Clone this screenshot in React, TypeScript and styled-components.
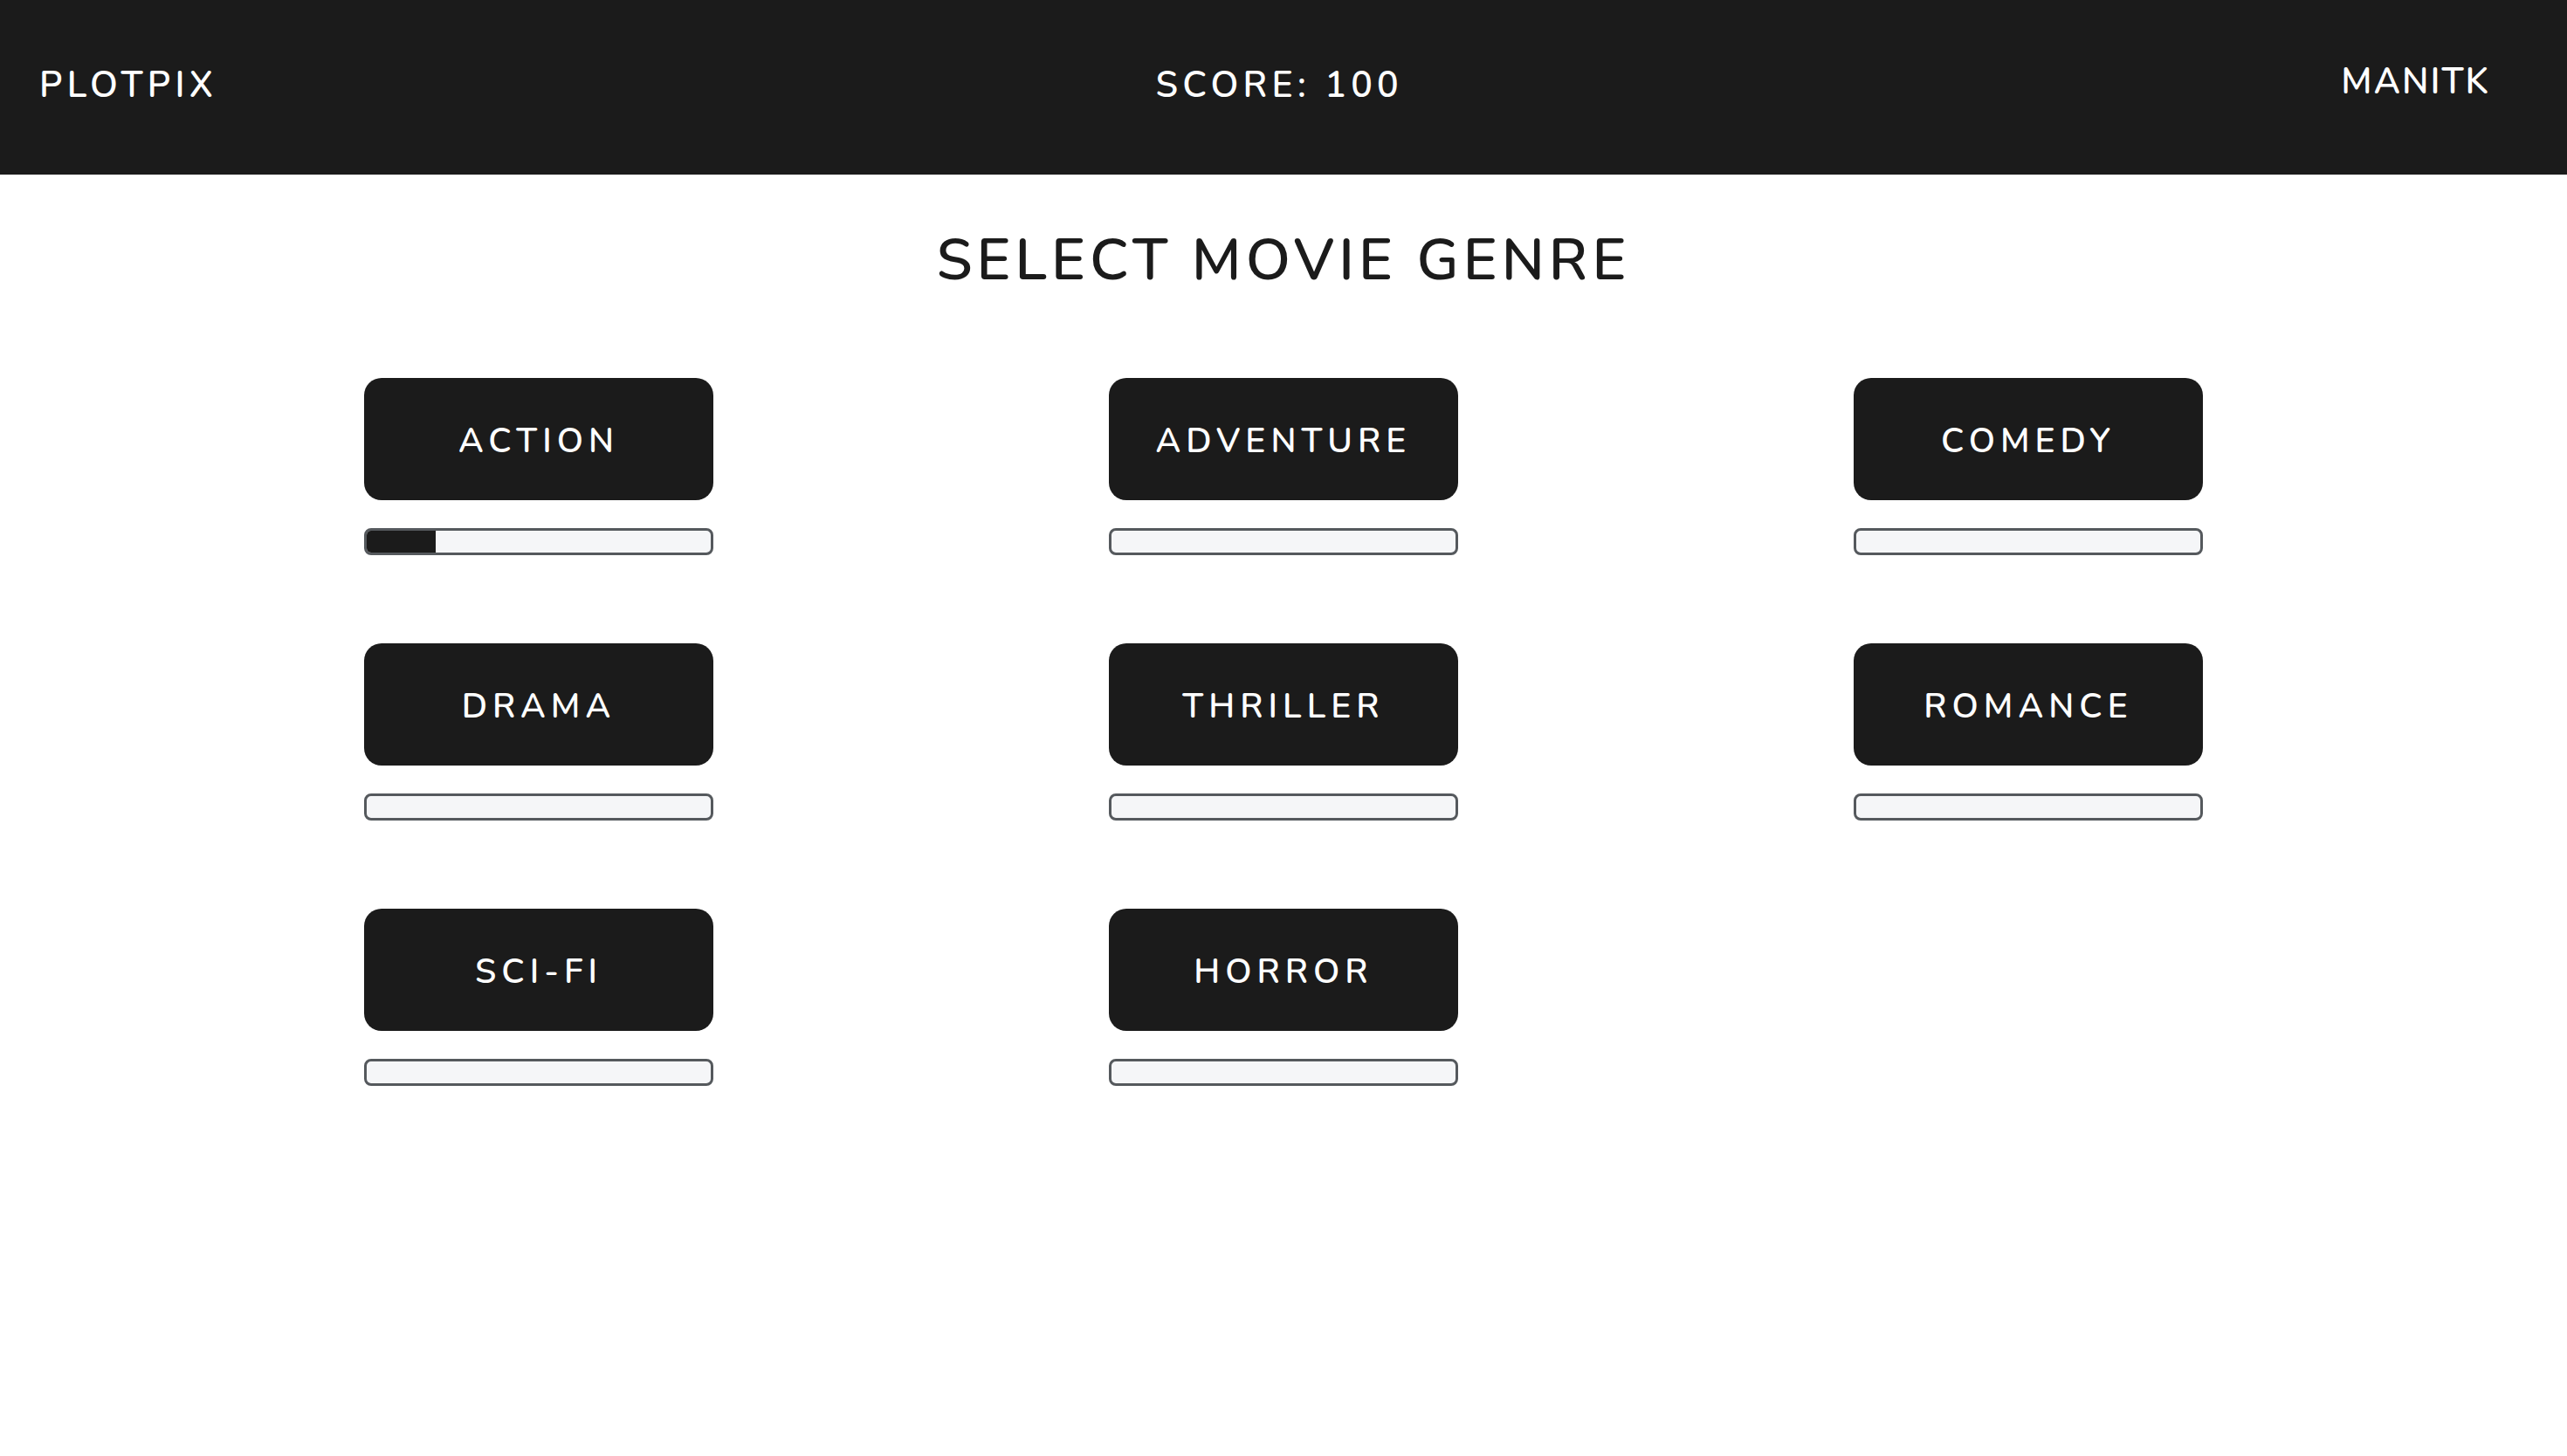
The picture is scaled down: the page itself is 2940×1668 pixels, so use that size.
import styled, { createGlobalStyle } from "styled-components";

const GlobalStyle = createGlobalStyle`
  html, body {
    margin: 0;
    padding: 0;
    background: #ffffff;
    font-family: "Nunito", "Lato", "Liberation Sans", sans-serif;
  }
`;

const genres = [
  { title: "ACTION", progress: 20 },
  { title: "ADVENTURE", progress: 0 },
  { title: "COMEDY", progress: 0 },
  { title: "DRAMA", progress: 0 },
  { title: "THRILLER", progress: 0 },
  { title: "ROMANCE", progress: 0 },
  { title: "SCI-FI", progress: 0 },
  { title: "HORROR", progress: 0 },
];

export default function App() {
  return (
    <>
      <GlobalStyle />
      <Header>
        <Logo>PLOTPIX</Logo>
        <Score>SCORE: 100</Score>
        <UserName>MANITK</UserName>
      </Header>
      <Main>
        <Title>SELECT MOVIE GENRE</Title>
        <Grid>
          {genres.map((genre) => (
            <GenreItem key={genre.title}>
              <GenreButton>{genre.title}</GenreButton>
              <ProgressTrack>
                <ProgressFill style={{ width: `${genre.progress}%` }} />
              </ProgressTrack>
            </GenreItem>
          ))}
        </Grid>
      </Main>
    </>
  );
}

const Header = styled.header`
  display: flex;
  justify-content: space-between;
  align-items: center;
  height: 200px;
  background: #1b1b1b;
  padding: 0 88px 6px 45px;
  box-sizing: border-box;
  color: #ffffff;
`;

const HeaderText = styled.span`
  font-weight: 600;
  font-size: 41px;
  letter-spacing: 0.13em;
  line-height: 1;
`;

const Logo = styled(HeaderText)``;

const Score = styled(HeaderText)`
  font-size: 41px;
`;

const UserName = styled(HeaderText)`
  letter-spacing: 0.05em;
  margin-bottom: 8px;
`;

const Main = styled.main`
  display: flex;
  flex-direction: column;
  align-items: center;
`;

const Title = styled.h1`
  margin: 58px 0 0;
  font-size: 66px;
  line-height: 80px;
  font-weight: 600;
  letter-spacing: 0.077em;
  color: #1b1b1b;
`;

const Grid = styled.div`
  display: grid;
  grid-template-columns: repeat(3, 400px);
  column-gap: 453px;
  row-gap: 101px;
  margin-top: 95px;
`;

const GenreItem = styled.div`
  display: flex;
  flex-direction: column;
  gap: 32px;
`;

const GenreButton = styled.button`
  height: 140px;
  width: 400px;
  border: none;
  border-radius: 20px;
  background: #1b1b1b;
  color: #ffffff;
  font-family: inherit;
  font-weight: 600;
  font-size: 39px;
  letter-spacing: 0.155em;
  padding: 4px 0 0;
  cursor: pointer;
`;

const ProgressTrack = styled.div`
  height: 31px;
  box-sizing: border-box;
  border: 3px solid #55595d;
  border-radius: 8px;
  background: #f5f6f8;
  overflow: hidden;
`;

const ProgressFill = styled.div`
  height: 100%;
  background: #1b1b1b;
`;
